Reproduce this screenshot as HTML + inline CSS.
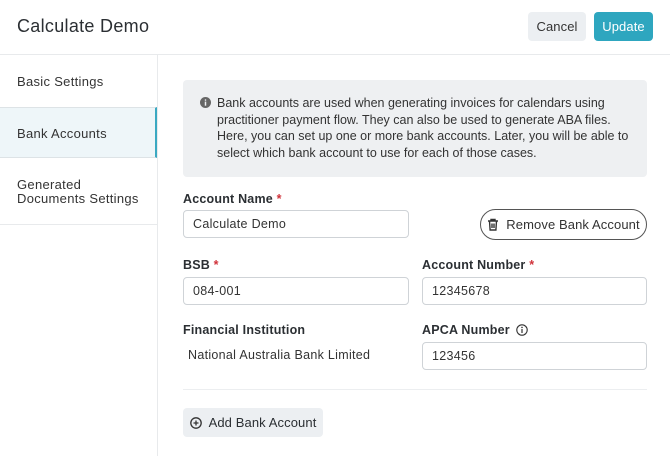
<!DOCTYPE html>
<html><head><meta charset="utf-8"><style>
*{box-sizing:border-box;margin:0;padding:0}
body{width:670px;height:456px;overflow:hidden;background:#fff;font-family:"Liberation Sans",sans-serif;color:#2b2f33;position:relative;letter-spacing:0.3px}
.a{position:absolute}
.btn{position:absolute;border-radius:4px;font-size:13px;display:flex;align-items:center;justify-content:center;letter-spacing:0.1px}
.lbl{position:absolute;font-size:12.5px;font-weight:bold;color:#2b2f33;letter-spacing:0.2px}
.lbl i{color:#d0323a;font-style:normal}
.inp{position:absolute;border:1px solid #cfd3d7;border-radius:4px;height:28px;font-size:12.5px;padding-left:9px;display:flex;align-items:center;color:#333}
.side{position:absolute;left:17px;font-size:13px;color:#333}
</style></head><body>
<div class="a" style="left:17px;top:16px;font-size:18px;color:#2b2f33">Calculate Demo</div>
<div class="btn" style="left:528px;top:12px;width:58px;height:29px;background:#eceff2;color:#333">Cancel</div>
<div class="btn" style="left:594px;top:12px;width:59px;height:29px;background:#2ea6bf;color:#fff">Update</div>
<div class="a" style="left:0;top:54px;width:670px;height:1px;background:#e8eaec"></div>
<div class="a" style="left:157px;top:55px;width:1px;height:401px;background:#e8eaec"></div>
<div class="side" style="top:74px">Basic Settings</div>
<div class="a" style="left:0;top:107px;width:157px;height:51px;background:#eef6f9;border-top:1px solid #dde3e6;border-bottom:1px solid #dde3e6;border-right:2px solid #3aa9c2"></div>
<div class="side" style="top:126px">Bank Accounts</div>
<div class="side" style="top:178px;line-height:14px">Generated<br>Documents Settings</div>
<div class="a" style="left:0;top:224px;width:157px;height:1px;background:#e8eaec"></div>
<div class="a" style="left:183px;top:80px;width:464px;height:97px;background:#eef0f2;border-radius:4px"></div>
<svg class="a" style="left:200px;top:97px" width="11" height="11" viewBox="0 0 12 12"><circle cx="6" cy="6" r="6" fill="#666"/><rect x="5.2" y="5" width="1.6" height="4.5" fill="#eef0f2"/><circle cx="6" cy="3.3" r="0.9" fill="#eef0f2"/></svg>
<div class="a" style="left:217px;top:95px;width:420px;font-size:12.5px;line-height:16.6px;color:#333;letter-spacing:0">Bank accounts are used when generating invoices for calendars using practitioner payment flow. They can also be used to generate ABA files. Here, you can set up one or more bank accounts. Later, you will be able to select which bank account to use for each of those cases.</div>
<div class="lbl" style="left:183px;top:192px">Account Name <i>*</i></div>
<div class="inp" style="left:183px;top:210px;width:226px">Calculate Demo</div>
<div class="btn" style="left:480px;top:209px;width:167px;height:31px;border:1px solid #555;border-radius:16px;color:#333">
<svg width="12" height="13" viewBox="0 0 12 13" style="margin-right:7px"><path d="M1 3h10M4 3V1.5h4V3M2.5 3l.6 9h5.8l.6-9M5 5.5v4.5M7 5.5v4.5" stroke="#333" stroke-width="1.4" fill="none"/></svg>Remove Bank Account</div>
<div class="lbl" style="left:183px;top:258px">BSB <i>*</i></div>
<div class="inp" style="left:183px;top:277px;width:226px">084-001</div>
<div class="lbl" style="left:422px;top:258px">Account Number <i>*</i></div>
<div class="inp" style="left:422px;top:277px;width:225px">12345678</div>
<div class="lbl" style="left:183px;top:323px">Financial Institution</div>
<div class="a" style="left:188px;top:348px;font-size:12.5px;color:#333">National Australia Bank Limited</div>
<div class="lbl" style="left:422px;top:323px">APCA Number <svg width="12" height="12" viewBox="0 0 12 12" style="vertical-align:-2px;margin-left:2px"><circle cx="6" cy="6" r="5.2" fill="none" stroke="#333" stroke-width="1.1"/><rect x="5.4" y="5" width="1.2" height="4" fill="#333"/><circle cx="6" cy="3.4" r="0.8" fill="#333"/></svg></div>
<div class="inp" style="left:422px;top:342px;width:225px">123456</div>
<div class="a" style="left:183px;top:389px;width:464px;height:1px;background:#eceef0"></div>
<div class="btn" style="left:183px;top:408px;width:140px;height:29px;background:#eceff2;color:#2b2f33;font-size:13px">
<svg width="12" height="12" viewBox="0 0 12 12" style="margin-right:7px"><circle cx="6" cy="6" r="5.2" fill="none" stroke="#333" stroke-width="1.3"/><path d="M6 3.5v5M3.5 6h5" stroke="#333" stroke-width="1.3"/></svg>Add Bank Account</div>
</body></html>
